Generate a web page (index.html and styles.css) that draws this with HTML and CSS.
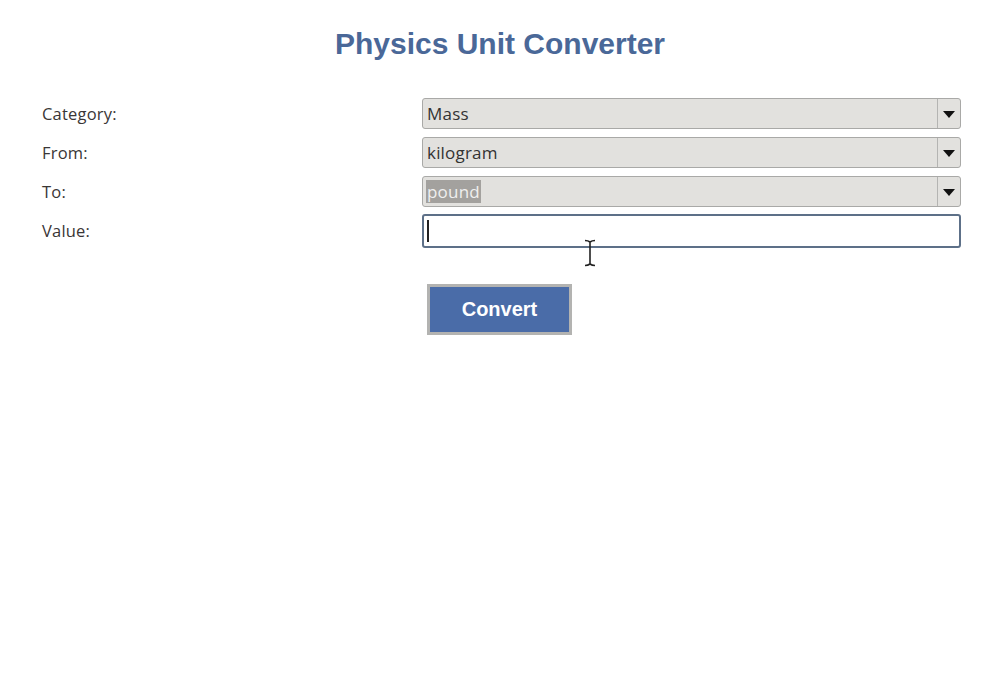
FILE: index.html
```html
<!DOCTYPE html>
<html lang="en">
<head>
  <meta charset="UTF-8" />
  <title>Physics Unit Converter</title>
  <link rel="stylesheet" href="styles.css">
</head>
<body>
  <h1>Physics Unit Converter</h1>

  <div class="form">
    <label>Category:</label>
    <div class="select"><span class="val">Mass</span><span class="arrow"></span></div>

    <label>From:</label>
    <div class="select"><span class="val">kilogram</span><span class="arrow"></span></div>

    <label>To:</label>
    <div class="select"><span class="val picked">pound</span><span class="arrow"></span></div>

    <label class="last">Value:</label>
    <div class="input"><span class="caret"></span></div>

    <div></div>
    <div class="actions">
      <button class="convert">Convert</button>
    </div>
  </div>

  <svg class="ibeam" width="12" height="28" viewBox="0 0 12 28">
    <path d="M1 1.5 Q4 1.5 6 3 Q8 1.5 11 1.5 M6 3 V25 M1 26.5 Q4 26.5 6 25 Q8 26.5 11 26.5" fill="none" stroke="#222" stroke-width="1.6"/>
  </svg>
</body>
</html>
```

FILE: styles.css
```css
body {
  margin: 0;
  background: #fff;
  font-family: "Open Sans", "Noto Sans", sans-serif;
  color: #333;
}
h1 {
  margin: 28px 0 0;
  text-align: center;
  font-family: "Liberation Sans", Arial, sans-serif;
  font-size: 30px;
  line-height: 32px;
  color: #4a6898;
}
.form {
  display: grid;
  grid-template-columns: 380px 539px;
  row-gap: 8px;
  padding-left: 42px;
  margin-top: 38px;
}
label {
  font-size: 16.5px;
  letter-spacing: 0.2px;
  line-height: 31px;
  color: #3a3636;
}
label.last {
  margin-top: -1px;
  line-height: 34px;
}
.select {
  display: flex;
  height: 31px;
  box-sizing: border-box;
  border: 1px solid #a9a9a7;
  border-radius: 3px;
  background: #e2e1de;
}
.val {
  flex: 1;
  align-self: center;
  padding-left: 4px;
  font-size: 17px;
  letter-spacing: 0.2px;
  color: #333;
}
.picked {
  flex: none;
  margin-left: 3px;
  padding: 0 1px;
  background: #a3a19e;
  color: #efefef;
}
.select .picked + .arrow { margin-left: auto; }
.arrow {
  width: 22px;
  border-left: 1px solid #b4b4b2;
  position: relative;
}
.arrow::after {
  content: "";
  position: absolute;
  left: 5px;
  top: 12px;
  border-left: 6px solid transparent;
  border-right: 6px solid transparent;
  border-top: 7px solid #111;
}
.input {
  margin-top: -1px;
  height: 34px;
  box-sizing: border-box;
  border: 2px solid #5d7088;
  border-radius: 3px;
  background: #fff;
  display: flex;
  align-items: center;
  padding-left: 3px;
}
.caret {
  width: 2px;
  height: 22px;
  background: #222;
}
.actions {
  padding: 28px 0 0 5px;
}
.convert {
  width: 145px;
  height: 51px;
  border: 3px solid #b3b3b1;
  background: #4a6ca8;
  color: #fff;
  font-family: "Liberation Sans", Arial, sans-serif;
  font-weight: bold;
  font-size: 20px;
  cursor: pointer;
}
.ibeam {
  position: absolute;
  left: 584px;
  top: 239px;
}
```
